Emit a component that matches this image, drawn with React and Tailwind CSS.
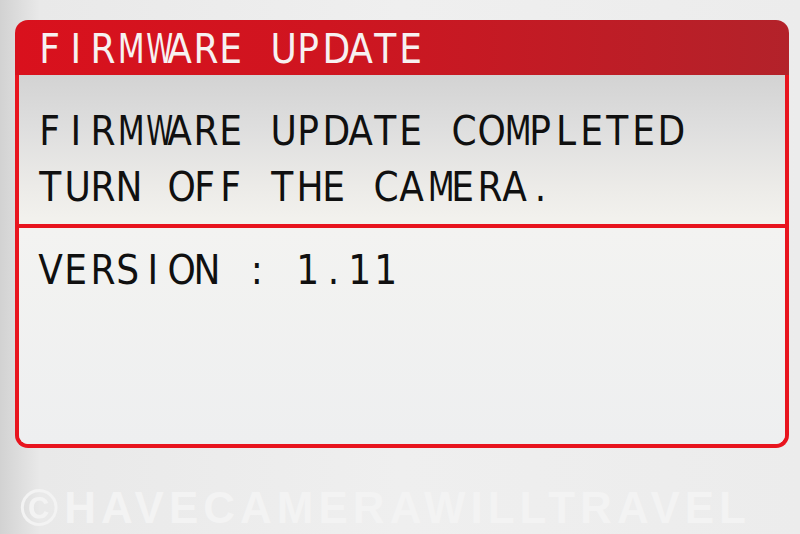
import React from "react";

const Cells = ({ text, className }) => (
  <div className={className}>
    {[...text].map((c, i) => (
      <span key={i} className="inline-block w-[25.8px] text-center">
        <span
          className={
            c === "W"
              ? "inline-block scale-x-[0.68]"
              : c === "M"
              ? "inline-block scale-x-[0.78]"
              : "inline-block scale-x-90"
          }
        >
          {c === " " ? "\u00a0" : c}
        </span>
      </span>
    ))}
  </div>
);

export default function App() {
  return (
    <div className="w-[800px] h-[534px] overflow-hidden bg-[linear-gradient(90deg,#d2d2d2_0%,#e9e9e9_5%,#efefef_50%,#ececec_100%)] flex flex-col">
      <div className="ml-[15px] mt-[20px] w-[774px] h-[428px] flex flex-col">
        {/* header */}
        <div className="h-[55px] shrink-0 rounded-t-[13px] bg-[linear-gradient(90deg,#d9111d_0%,#cf1520_40%,#b3222a_100%)] pl-[22px] pt-[9px]">
          <Cells
            text="FIRMWARE UPDATE"
            className="flex text-[40px] leading-[40px] text-[#f7f1f1] font-['DejaVu_Sans',sans-serif]"
          />
        </div>
        {/* body */}
        <div className="flex-1 flex flex-col border-x-[4px] border-b-[4px] border-[#e8141e] rounded-b-[13px] overflow-hidden">
          <div className="h-[149px] shrink-0 bg-[linear-gradient(180deg,#d3d3d3_0%,#dedede_35%,#ecebe8_75%,#f3f2ee_100%)] pl-[18px] pt-[36px] flex flex-col gap-[16px] text-[#101010] font-['DejaVu_Sans',sans-serif] text-[40px] leading-[40px]">
            <Cells text="FIRMWARE UPDATE COMPLETED" className="flex" />
            <Cells text="TURN OFF THE CAMERA." className="flex" />
          </div>
          <div className="h-[4px] shrink-0 bg-[#e8141e]" />
          <div className="flex-1 bg-[linear-gradient(180deg,#f3f3f1_0%,#eeeff0_100%)] pl-[18px] pt-[22px] text-[#101010] font-['DejaVu_Sans',sans-serif] text-[40px] leading-[40px]">
            <Cells text="VERSION : 1.11" className="flex" />
          </div>
        </div>
      </div>
      {/* watermark */}
      <div className="mt-[34px] ml-[20px] flex items-center text-[#f3f3f3] font-['Liberation_Sans',sans-serif] font-bold leading-[52px]">
        <span className="text-[52px] mr-[6px]">©</span>
        <span className="text-[44px] tracking-[5px]">HAVECAMERAWILLTRAVEL</span>
      </div>
    </div>
  );
}
